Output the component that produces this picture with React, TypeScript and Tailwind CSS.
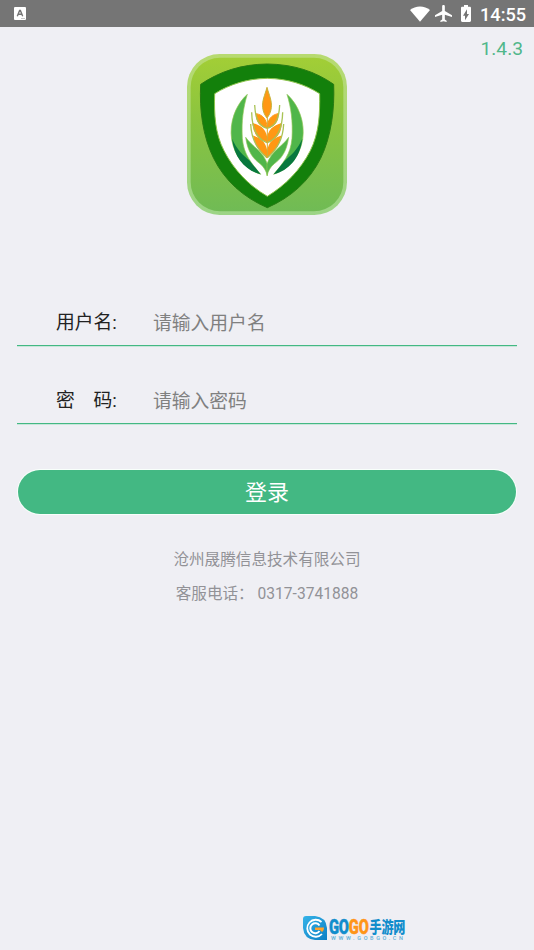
import { useState } from 'react'

interface FieldProps {
  label: string
  placeholder: string
  type: string
  value: string
  onChange: (value: string) => void
}

const StatusBar = () => (
  <header className="flex h-[27px] shrink-0 items-center bg-[#757575] text-white">
    <svg className="ml-[14px] h-[13px] w-[12px]" viewBox="0 0 12 13">
      <rect width="12" height="13" rx="1" fill="#fff" />
      <path d="M3.3 9.2 5.6 3.4h.8l2.3 5.8M4.2 7.3h3.6" fill="none" stroke="#757575" strokeWidth="1.4" />
      <path d="M7 11.5h4" stroke="#bbb" strokeWidth=".8" />
    </svg>
    <svg className="ml-auto h-[16px] w-[20px]" viewBox="0 0 20 16" fill="currentColor">
      <path d="M0 4C2.8 1.7 6.2.5 10 .5S17.200 1.700 20 4L10 15.800z" />
    </svg>
    <svg className="ml-[5px] h-[17px] w-[17px]" viewBox="2 2 19 20" preserveAspectRatio="none" fill="currentColor">
      <path d="M21 16v-2l-8-5V3.500C13 2.670 12.330 2 11.500 2S10 2.670 10 3.500V9l-8 5v2l8-2.500V19l-2 1.500V22l3.500-1 3.500 1v-1.500L13 19v-5.500z" />
    </svg>
    <svg className="mr-px ml-[9px] h-[17px] w-[10px]" viewBox="7 2 10 20" preserveAspectRatio="none" fill="currentColor">
      <path d="M15.670 4H14V2h-4v2H8.330C7.600 4 7 4.600 7 5.330v15.330C7 21.400 7.600 22 8.330 22h7.330c.74 0 1.340-.6 1.340-1.330V5.330C17 4.600 16.400 4 15.670 4zM11 20v-5.500H9L13 7v5.500h2z" />
    </svg>
    <span className="mt-px mr-[9px] ml-[8px] w-[45px] text-[18.200px] leading-[27px] font-medium whitespace-nowrap">14:55</span>
  </header>
)

const ShieldLogo = () => (
  <svg className="mx-auto block h-[161px] w-[160px]" viewBox="21 24 480 483">
    <defs>
      <linearGradient id="tile" x1="0" y1="0" x2="0" y2="1">
        <stop offset="0" stopColor="#a2ce36" />
        <stop offset=".4" stopColor="#8bc43f" />
        <stop offset="1" stopColor="#70bb55" />
      </linearGradient>
      <linearGradient id="rim" x1="0" y1="0" x2="0" y2="1">
        <stop offset="0" stopColor="#b7da70" />
        <stop offset="1" stopColor="#9cd486" />
      </linearGradient>
    </defs>
    <rect x="21" y="24" width="480" height="483" rx="98" fill="url(#rim)" />
    <rect x="32" y="35" width="458" height="461" rx="88" fill="url(#tile)" />
    <path
      d="M262 54C340 55 405 76 461 115C464 190 454 270 422 337C388 405 333 454 262 485C190 454 135 405 101 337C68 270 58 190 62 115C120 76 184 55 262 54Z"
      fill="#13800b"
      stroke="#267a13"
      strokeWidth="3"
    />
    <path
      d="M262 97C323 98 375 115 419 143C420 205 417 262 391 314C362 371 316 418 262 451C206 418 161 371 132 314C105 262 102 205 104 143C149 115 201 98 262 97Z"
      fill="#fff"
      stroke="#8bc34a"
      strokeWidth="3"
    />
    {/* outer leaves, mirrored around the stalk */}
    <g id="leaf">
      <path d="M202 145C167 176 147 229 155 281C165 336 199 371 242 385C214 351 191 326 187 277C184 225 190 184 202 145Z" fill="#50b64a" stroke="#8fc654" strokeWidth="2" />
      <path d="M156 278C163 337 197 373 242 385C230 370 219 357 209 344C190 329 169 308 156 278Z" fill="#08783e" />
      <path d="M197 274C203 320 222 340 240 353C252 363 258 374 262 389V354C248 314 218 304 197 274Z" fill="#50b64a" stroke="#8fc654" strokeWidth="2" />
    </g>
    <use href="#leaf" transform="matrix(-1 0 0 1 523 0)" />
    <path
      d="M261 124C254 149 246 164 248 185C250 200 255 208 261 216C267 208 272 200 274 185C276 164 268 149 261 124Z"
      fill="#ff9814"
      stroke="#c5b33b"
      strokeWidth="3"
    />
    <g id="grain">
      <path d="M261 245C239 241 228 227 229 203C248 207 260 219 261 245Z" fill="#ff9814" stroke="#ff9814" strokeWidth="3" />
      <path d="M261 286C236 279 222 263 220 234C242 242 258 250 261 286Z" fill="#ff9814" stroke="#ff9814" strokeWidth="5" />
      <path d="M261 331C240 314 226 298 222 272C246 280 260 295 261 331Z" fill="#ff9814" stroke="#ff9814" strokeWidth="5" />
      <path
        d="M224 177C226 216 234 239 261 247M215 199C216 246 230 279 261 290M212 234C214 283 234 313 261 335"
        fill="none"
        stroke="#a9c355"
        strokeWidth="4"
      />
    </g>
    <use href="#grain" transform="matrix(-1 0 0 1 523 0)" />
    <path d="M262 216V335" stroke="#d3ad35" strokeWidth="3" />
  </svg>
)

const Field = ({ label, placeholder, type, value, onChange }: FieldProps) => (
  <label className="flex h-[46px] items-center border-b border-[#43b883] pt-[3px] text-[18.800px] shadow-[0_1px_0_#c8e6da]">
    <span className="mb-[2px] ml-[39px] w-[97px] whitespace-pre text-[#222]">{label}</span>
    <input
      className="mt-px min-w-0 flex-1 bg-transparent outline-none placeholder:text-[#808080]"
      type={type}
      placeholder={placeholder}
      value={value}
      onChange={(e) => onChange(e.target.value)}
    />
  </label>
)

const SiteMark = () => (
  <div className="mt-auto mb-[8px] ml-[303px] flex h-[26px] w-[103px] items-start">
    <svg className="h-[24px] w-[24px] shrink-0" viewBox="0 0 24 24">
      <defs>
        <linearGradient id="mark" x1="0" y1="0" x2="1" y2="1">
          <stop offset="0" stopColor="#35b3e8" />
          <stop offset="1" stopColor="#0d7fc4" />
        </linearGradient>
      </defs>
      <path d="M3 0H12Q23 1 24 12V24H12Q1 23 0 12V3Q0 0 3 0Z" fill="url(#mark)" />
      <path d="M18.500 6A8.500 8.500 0 1 0 19 18" fill="none" stroke="#fff" strokeWidth="1.800" />
      <path d="M16.500 9.500A5 5 0 1 0 16.500 15" fill="none" stroke="#fff" strokeWidth="2" />
      <path d="M12 11.500h9c0 2-.7 3.500-2 4.500l-2-2h-5z" fill="#ffa32c" />
    </svg>
    <svg className="ml-[2px] h-[26px] w-[77px] overflow-visible" viewBox="0 0 77 26">
      <g fontWeight="900">
        <text transform="translate(0 17.500) scale(.7 1)" fontSize="21" textLength="57" fill="#128dcc" stroke="#128dcc" strokeWidth=".5">
          GO<tspan fill="#ff9519" stroke="#ff9519">GO</tspan>
        </text>
        <text transform="translate(40.500 16.500) scale(.78 1)" fontSize="15.500" textLength="46" fill="#128dcc">
          手游网
        </text>
      </g>
      <text x="2" y="24" fontSize="5.500" fontWeight="500" textLength="72" fill="#5fb0d8">
        WWW.GOBGO.CN
      </text>
    </svg>
  </div>
)

const App = () => {
  const [username, setUsername] = useState('')
  const [password, setPassword] = useState('')

  return (
    <div className="flex h-screen min-h-[950px] flex-col overflow-hidden bg-[#efeff4] font-[Roboto,'Noto_Sans_CJK_SC',sans-serif]">
      <StatusBar />
      <p className="mt-[8px] mr-[11px] h-[19px] text-right text-[19.200px] leading-[27px] text-[#51b78a]">1.4.3</p>
      <ShieldLogo />

      <form className="mx-[17px] mt-[85px]" onSubmit={(e) => e.preventDefault()}>
        <Field label="用户名:" placeholder="请输入用户名" type="text" value={username} onChange={setUsername} />
        <div className="h-8" />
        <Field label="密　码:" placeholder="请输入密码" type="password" value={password} onChange={setPassword} />
        <button
          type="submit"
          className="mx-px mt-[46px] block h-[44px] w-[498px] rounded-[22px] bg-[#43b883] pt-px text-[22px] leading-[44px] text-white shadow-[0_0_0_1px_#f8fffb]"
        >
          登录
        </button>
      </form>

      <footer className="mt-[29px] text-center text-[15.600px] leading-[34px] text-[#929297]">
        <p>沧州晟腾信息技术有限公司</p>
        <p>客服电话： 0317-3741888</p>
      </footer>
      <SiteMark />
    </div>
  )
}

export default App
